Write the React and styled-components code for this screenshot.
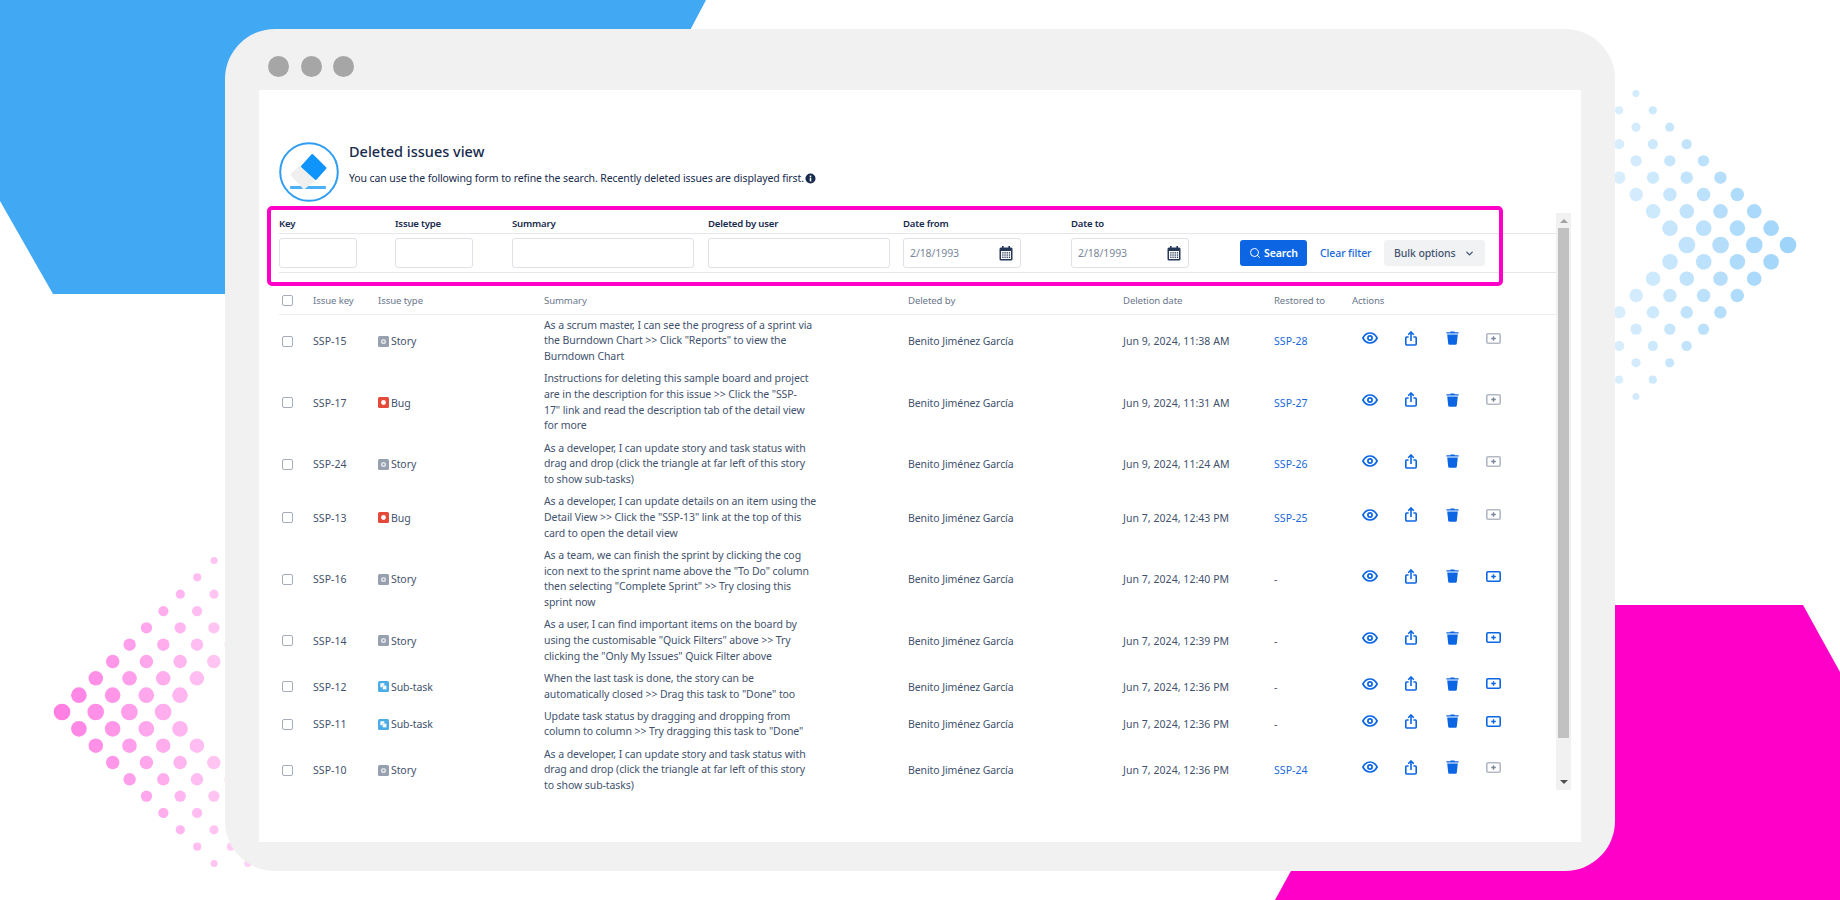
import React from "react"
import styled, { createGlobalStyle } from "styled-components"
import { Search, ChevronDown } from "lucide-react"

const GlobalStyle = createGlobalStyle`
    html, body {
        margin: 0;
        background: #fff;
        font-family: "Noto Sans", "Open Sans", Arial, sans-serif;
    }
    * { box-sizing: border-box; }
`

const rows = [
    { id: "SSP-15", type: "Story", lines: ["As a scrum master, I can see the progress of a sprint via", "the Burndown Chart >> Click \"Reports\" to view the", "Burndown Chart"], date: "Jun 9, 2024, 11:38 AM", restored: "SSP-28" },
    { id: "SSP-17", type: "Bug", lines: ["Instructions for deleting this sample board and project", "are in the description for this issue >> Click the \"SSP-", "17\" link and read the description tab of the detail view", "for more"], date: "Jun 9, 2024, 11:31 AM", restored: "SSP-27" },
    { id: "SSP-24", type: "Story", lines: ["As a developer, I can update story and task status with", "drag and drop (click the triangle at far left of this story", "to show sub-tasks)"], date: "Jun 9, 2024, 11:24 AM", restored: "SSP-26" },
    { id: "SSP-13", type: "Bug", lines: ["As a developer, I can update details on an item using the", "Detail View >> Click the \"SSP-13\" link at the top of this", "card to open the detail view"], date: "Jun 7, 2024, 12:43 PM", restored: "SSP-25" },
    { id: "SSP-16", type: "Story", lines: ["As a team, we can finish the sprint by clicking the cog", "icon next to the sprint name above the \"To Do\" column", "then selecting \"Complete Sprint\" >> Try closing this", "sprint now"], date: "Jun 7, 2024, 12:40 PM" },
    { id: "SSP-14", type: "Story", lines: ["As a user, I can find important items on the board by", "using the customisable \"Quick Filters\" above >> Try", "clicking the \"Only My Issues\" Quick Filter above"], date: "Jun 7, 2024, 12:39 PM" },
    { id: "SSP-12", type: "Sub-task", lines: ["When the last task is done, the story can be", "automatically closed >> Drag this task to \"Done\" too"], date: "Jun 7, 2024, 12:36 PM" },
    { id: "SSP-11", type: "Sub-task", lines: ["Update task status by dragging and dropping from", "column to column >> Try dragging this task to \"Done\""], date: "Jun 7, 2024, 12:36 PM" },
    { id: "SSP-10", type: "Story", lines: ["As a developer, I can update story and task status with", "drag and drop (click the triangle at far left of this story", "to show sub-tasks)"], date: "Jun 7, 2024, 12:36 PM", restored: "SSP-24" },
]

function dotsFor(dir) {
    const list = []
    for (let k = -9; k <= 9; k++) {
        const a = Math.abs(k)
        for (let c = 0; c < 4; c++) {
            list.push({
                key: `${k}-${c}`,
                dx: dir * (a * 16.9 + c * 33.7),
                dy: k * 16.83,
                r: (50 - 3.2 * a) / 6,
                o: 0.5 - (a * 16.9 + c * 33.7) / 152 * 0.27,
            })
        }
    }
    return list
}

const Dots = ({ className, dir, x, y, color }) => (
    <svg className={className} viewBox="0 0 300 370">
        {dotsFor(dir).map(d => (
            <circle key={d.key} cx={x + d.dx} cy={y + d.dy} r={d.r} fill={color} opacity={Math.max(d.o, 0.18)} />
        ))}
    </svg>
)

const EraserIcon = () => (
    <svg width="60" height="60" viewBox="0 0 60 60">
        <circle cx="30" cy="30" r="28.8" fill="#fff" stroke="#2f9df2" strokeWidth="2" />
        <rect x="11" y="44" width="36" height="3" rx="1" fill="#4ab0f7" />
        <path d="M21 24.4 L12.4 32.8 L25 46.2 L34.4 38.6 Z" fill="#efeff0" stroke="#efeff0" strokeWidth="2" strokeLinejoin="round" />
        <path d="M33.3 13 L46.4 26 L36.7 37 L23 24.4 Z" fill="#0f94fb" stroke="#0f94fb" strokeWidth="2" strokeLinejoin="round" />
    </svg>
)

const InfoIcon = () => (
    <svg width="11" height="11" viewBox="0 0 11 11">
        <circle cx="5.5" cy="5.5" r="5" fill="#172b4d" />
        <rect x="4.7" y="4.6" width="1.6" height="3.8" fill="#fff" />
        <rect x="4.7" y="2.6" width="1.6" height="1.4" fill="#fff" />
    </svg>
)

const CalendarIcon = () => (
    <svg width="14" height="15" viewBox="0 0 14 15">
        <rect x="3" y="0" width="1.6" height="3" fill="#253858" />
        <rect x="9.4" y="0" width="1.6" height="3" fill="#253858" />
        <rect x="0.5" y="1.5" width="13" height="13" rx="1.5" fill="#253858" />
        <rect x="2" y="5" width="10" height="8" fill="#fff" />
        {[6.2, 8.4, 10.6].map(y => [3.2, 5.4, 7.6, 9.8].map(x => (
            <rect key={`${x}-${y}`} x={x} y={y} width="1.3" height="1.3" fill="#253858" />
        )))}
    </svg>
)

const TypeIcon = ({ type }) => {
    if (type === "Bug") {
        return (
            <svg width="11" height="11" viewBox="0 0 11 11">
                <rect width="11" height="11" rx="1.5" fill="#e5493a" />
                <circle cx="5.5" cy="5.5" r="2.4" fill="#fff" />
            </svg>
        )
    }
    if (type === "Sub-task") {
        return (
            <svg width="11" height="11" viewBox="0 0 11 11">
                <rect width="11" height="11" rx="1.5" fill="#4bade8" />
                <rect x="2.4" y="2.2" width="4" height="4" rx=".5" fill="#fff" />
                <rect x="4.6" y="4.6" width="4" height="4" rx=".5" fill="#fff" stroke="#4bade8" strokeWidth=".4" />
            </svg>
        )
    }
    return (
        <svg width="11" height="11" viewBox="0 0 11 11">
            <rect width="11" height="11" rx="1.5" fill="#97a0af" />
            <circle cx="5.5" cy="5.5" r="2.6" fill="#dfe1e6" />
            <circle cx="5.5" cy="5.5" r="1" fill="#97a0af" />
        </svg>
    )
}

const EyeIcon = () => (
    <svg width="16" height="12" viewBox="0 0 16 12" fill="none" stroke="#0c66e4" strokeWidth="1.7">
        <path d="M.9 6 C2.6 2.7 5 1 8 1 s5.4 1.7 7.1 5 C13.4 9.3 11 11 8 11 S2.6 9.3.9 6 Z" />
        <circle cx="8" cy="6" r="2.1" />
    </svg>
)

const ShareIcon = () => (
    <svg width="12" height="15" viewBox="0 0 12 15" fill="none" stroke="#0c66e4" strokeWidth="1.6">
        <path d="M3.6 6 H1.6 a.8.8 0 0 0 -.8.8 V13 a1 1 0 0 0 1 1 H10.2 a1 1 0 0 0 1 -1 V6.8 a.8.8 0 0 0 -.8 -.8 H8.4" />
        <path d="M6 10 V1.4" />
        <path d="M3.2 3.8 L6 1 L8.8 3.8" />
    </svg>
)

const TrashIcon = () => (
    <svg width="13" height="14" viewBox="0 0 13 14" fill="#0c66e4">
        <path d="M4.6 .4 H8.4 L8.8 1.3 H12.2 a.5.5 0 0 1 .5 .5 V2.6 H.3 V1.8 a.5.5 0 0 1 .5 -.5 H4.2 Z" />
        <path d="M1.2 3.6 H11.8 L10.8 12.8 a1.2 1.2 0 0 1 -1.2 1 H3.4 a1.2 1.2 0 0 1 -1.2 -1 Z" />
    </svg>
)

const RestoreIcon = ({ disabled }) => {
    const color = disabled ? "#b3b9c4" : "#0c66e4"
    return (
        <svg width="15" height="11" viewBox="0 0 15 11" fill="none">
            <rect x=".8" y=".8" width="13.4" height="9.4" rx="1.2" stroke={color} strokeWidth="1.6" />
            <path d="M7.5 3.2 V7.8 M5.2 5.5 H9.8" stroke={disabled ? "#7a869a" : "#0c66e4"} strokeWidth="1.4" />
        </svg>
    )
}

export default function App() {
    return (
        <Page>
            <GlobalStyle />
            <BlueShape />
            <PinkShape />
            <BlueDots dir={-1} x={248} y={185} color="#3fa9f5" />
            <PinkDots dir={1} x={62} y={182} color="#ff00c8" />
            <BrowserWindow>
                <WindowBar>
                    <WindowDot />
                    <WindowDot />
                    <WindowDot />
                </WindowBar>
                <Content>
                    <Header>
                        <EraserIcon />
                        <HeaderText>
                            <Title>Deleted issues view</Title>
                            <Subtitle>
                                You can use the following form to refine the search. Recently deleted issues are displayed first.
                                <InfoIcon />
                            </Subtitle>
                        </HeaderText>
                    </Header>
                    <Body>
                        <Main>
                            <FilterPanel>
                                <Highlight />
                                <FilterRow $height={21}>
                                    <FilterLabel>Key</FilterLabel>
                                    <FilterLabel>Issue type</FilterLabel>
                                    <FilterLabel>Summary</FilterLabel>
                                    <FilterLabel>Deleted by user</FilterLabel>
                                    <FilterLabel>Date from</FilterLabel>
                                    <FilterLabel>Date to</FilterLabel>
                                </FilterRow>
                                <FilterRow $height={39}>
                                    <TextInput $width={78} />
                                    <TextInput $width={78} />
                                    <TextInput $width={182} />
                                    <TextInput $width={182} />
                                    <DateInput>2/18/1993<CalendarIcon /></DateInput>
                                    <DateInput>2/18/1993<CalendarIcon /></DateInput>
                                    <FilterActions>
                                        <SearchButton><Search size={12} strokeWidth={2} />Search</SearchButton>
                                        <ClearLink>Clear filter</ClearLink>
                                        <BulkButton>Bulk options<ChevronDown size={11} strokeWidth={3} /></BulkButton>
                                    </FilterActions>
                                </FilterRow>
                            </FilterPanel>
                            <TableWrap>
                                <IssueTable>
                                    <colgroup>
                                        <col style={{ width: 34 }} />
                                        <col style={{ width: 65 }} />
                                        <col style={{ width: 166 }} />
                                        <col style={{ width: 364 }} />
                                        <col style={{ width: 215 }} />
                                        <col style={{ width: 151 }} />
                                        <col style={{ width: 78 }} />
                                        <col />
                                    </colgroup>
                                    <thead>
                                        <tr>
                                            <HeadCell><Checkbox /></HeadCell>
                                            <HeadCell>Issue key</HeadCell>
                                            <HeadCell>Issue type</HeadCell>
                                            <HeadCell>Summary</HeadCell>
                                            <HeadCell>Deleted by</HeadCell>
                                            <HeadCell>Deletion date</HeadCell>
                                            <HeadCell>Restored to</HeadCell>
                                            <HeadCell>Actions</HeadCell>
                                        </tr>
                                    </thead>
                                    <tbody>
                                        {rows.map(row => (
                                            <tr key={row.id}>
                                                <Cell><Checkbox /></Cell>
                                                <NumericCell>{row.id}</NumericCell>
                                                <Cell><IssueType><TypeIcon type={row.type} />{row.type}</IssueType></Cell>
                                                <Cell>{row.lines.map(line => <SummaryLine key={line}>{line}</SummaryLine>)}</Cell>
                                                <Cell>Benito Jiménez García</Cell>
                                                <NumericCell>{row.date}</NumericCell>
                                                <NumericCell>{row.restored ? <RestoredLink>{row.restored}</RestoredLink> : "-"}</NumericCell>
                                                <Cell>
                                                    <ActionList>
                                                        <ActionSlot><EyeIcon /></ActionSlot>
                                                        <ActionSlot><ShareIcon /></ActionSlot>
                                                        <ActionSlot><TrashIcon /></ActionSlot>
                                                        <ActionSlot><RestoreIcon disabled={!!row.restored} /></ActionSlot>
                                                    </ActionList>
                                                </Cell>
                                            </tr>
                                        ))}
                                    </tbody>
                                </IssueTable>
                            </TableWrap>
                        </Main>
                        <ScrollBar>
                            <ScrollUp />
                            <ScrollThumb />
                            <ScrollDown />
                        </ScrollBar>
                    </Body>
                </Content>
            </BrowserWindow>
        </Page>
    )
}

const Page = styled.div`
    position: relative;
    width: 1840px;
    height: 900px;
    overflow: hidden;
    background: #fff;
    padding: 29px 225px;
`

const BlueShape = styled.div`
    position: absolute;
    left: 0;
    top: 0;
    width: 706px;
    height: 294px;
    background: #41a8f3;
    clip-path: polygon(0 0, 706px 0, 551px 294px, 53px 294px, 0 201px);
`

const PinkShape = styled.div`
    position: absolute;
    left: 1275px;
    top: 605px;
    width: 565px;
    height: 295px;
    background: #ff00c8;
    clip-path: polygon(162px 0, 528px 0, 565px 67px, 565px 295px, 0 295px);
`

const BlueDots = styled(Dots)`
    position: absolute;
    left: 1540px;
    top: 60px;
    width: 300px;
    height: 370px;
`

const PinkDots = styled(Dots)`
    position: absolute;
    left: 0;
    top: 530px;
    width: 300px;
    height: 370px;
`

const BrowserWindow = styled.div`
    position: relative;
    height: 842px;
    border-radius: 50px;
    background: #f1f1f1;
    padding: 0 34px 29px;
    display: flex;
    flex-direction: column;
`

const WindowBar = styled.div`
    height: 61px;
    display: flex;
    align-items: center;
    gap: 11.5px;
    padding: 13px 0 0 9px;
`

const WindowDot = styled.span`
    width: 21px;
    height: 21px;
    border-radius: 50%;
    background: #a6a6a6;
`

const Content = styled.div`
    flex: 1;
    background: #fff;
    padding: 52px 10px 0 20px;
    min-height: 0;
`

const Header = styled.div`
    display: flex;
    gap: 10px;
    height: 60px;
    margin-bottom: 11px;
`

const HeaderText = styled.div`
    display: flex;
    flex-direction: column;
`

const Title = styled.h1`
    margin: -1px 0 0;
    font-size: 14.5px;
    line-height: 20px;
    font-weight: 500;
    color: #172b4d;
`

const Subtitle = styled.div`
    margin-top: 10px;
    display: flex;
    align-items: center;
    gap: 1px;
    font-size: 10.5px;
    letter-spacing: -0.1px;
    line-height: 15px;
    color: #172b4d;
`

const Body = styled.div`
    display: flex;
    height: 577px;
`

const Main = styled.div`
    width: 1278px;
    display: flex;
    flex-direction: column;
    min-height: 0;
`

const FilterPanel = styled.div`
    position: relative;
`

const Highlight = styled.div`
    position: absolute;
    left: -12.5px;
    top: -7px;
    width: 1236.5px;
    height: 80px;
    border: 4.5px solid #ff00c8;
    border-radius: 5px;
    pointer-events: none;
`

const FilterRow = styled.div`
    display: grid;
    grid-template-columns: 116px 117px 196px 195px 168px 169px 1fr;
    align-items: center;
    height: ${props => props.$height}px;
    border-bottom: 1px solid #e4e6ea;
`

const FilterLabel = styled.label`
    font-size: 9.6px;
    font-weight: 600;
    letter-spacing: -0.2px;
    color: #172b4d;
`

const TextInput = styled.div`
    width: ${props => props.$width}px;
    height: 30px;
    border: 1px solid #dfe1e6;
    border-radius: 3px;
    background: #fff;
`

const DateInput = styled.div`
    width: 118px;
    height: 30px;
    border: 1px solid #dfe1e6;
    border-radius: 3px;
    padding: 0 7px 0 6px;
    display: flex;
    align-items: center;
    justify-content: space-between;
    font-size: 10.5px;
    letter-spacing: -0.1px;
    color: #7a869a;
`

const FilterActions = styled.div`
    display: flex;
    align-items: center;
`

const SearchButton = styled.button`
    width: 67px;
    height: 26px;
    padding: 0;
    border: 0;
    border-radius: 3px;
    background: #0c66e4;
    color: #fff;
    font: 600 10.5px "Noto Sans", sans-serif;
    letter-spacing: -0.1px;
    display: flex;
    align-items: center;
    justify-content: center;
    gap: 3px;
`

const ClearLink = styled.a`
    margin-left: 13px;
    width: 64px;
    font-size: 10.5px;
    font-weight: 500;
    letter-spacing: -0.1px;
    color: #1868db;
`

const BulkButton = styled.button`
    width: 101px;
    height: 26px;
    padding: 0 10px;
    border: 0;
    border-radius: 3px;
    background: #f1f2f4;
    color: #44546f;
    font: 500 10.5px "Noto Sans", sans-serif;
    letter-spacing: -0.1px;
    display: flex;
    align-items: center;
    justify-content: space-between;
`

const TableWrap = styled.div`
    margin-top: 15px;
`

const IssueTable = styled.table`
    width: 100%;
    table-layout: fixed;
    border-collapse: collapse;
`

const HeadCell = styled.th`
    height: 26px;
    padding: 0;
    text-align: left;
    font-size: 9.6px;
    font-weight: 400;
    letter-spacing: -0.1px;
    color: #6b778c;
    border-bottom: 1px solid #ebecf0;
`

const Cell = styled.td`
    padding: 3.25px 0;
    vertical-align: middle;
    font-size: 10.5px;
    letter-spacing: -0.09px;
    color: #42526e;
`

const NumericCell = styled(Cell)`
    letter-spacing: 0.05px;
`

const Checkbox = styled.span`
    display: block;
    margin-left: 3px;
    width: 11px;
    height: 11px;
    border: 1px solid #a5adba;
    border-radius: 2px;
    background: #fff;
`

const IssueType = styled.span`
    display: flex;
    align-items: center;
    gap: 2px;
`

const SummaryLine = styled.div`
    line-height: 15.7px;
    white-space: nowrap;
`

const RestoredLink = styled.a`
    color: #1868db;
`

const ActionList = styled.div`
    display: flex;
    padding-bottom: 6px;
`

const ActionSlot = styled.span`
    width: 41px;
    height: 14px;
    display: flex;
    align-items: center;
    justify-content: center;
    padding-right: 5px;
`

const ScrollBar = styled.div`
    width: 15px;
    height: 577px;
    background: #f1f1f1;
    display: flex;
    flex-direction: column;
    align-items: center;
`

const ScrollUp = styled.div`
    margin: 6px 0 5px;
    width: 0;
    height: 0;
    border-left: 4px solid transparent;
    border-right: 4px solid transparent;
    border-bottom: 4px solid #a3a3a3;
`

const ScrollThumb = styled.div`
    width: 11.5px;
    height: 510px;
    background: #c1c1c1;
`

const ScrollDown = styled.div`
    margin-top: auto;
    margin-bottom: 6px;
    width: 0;
    height: 0;
    border-left: 4px solid transparent;
    border-right: 4px solid transparent;
    border-top: 4px solid #505050;
`
